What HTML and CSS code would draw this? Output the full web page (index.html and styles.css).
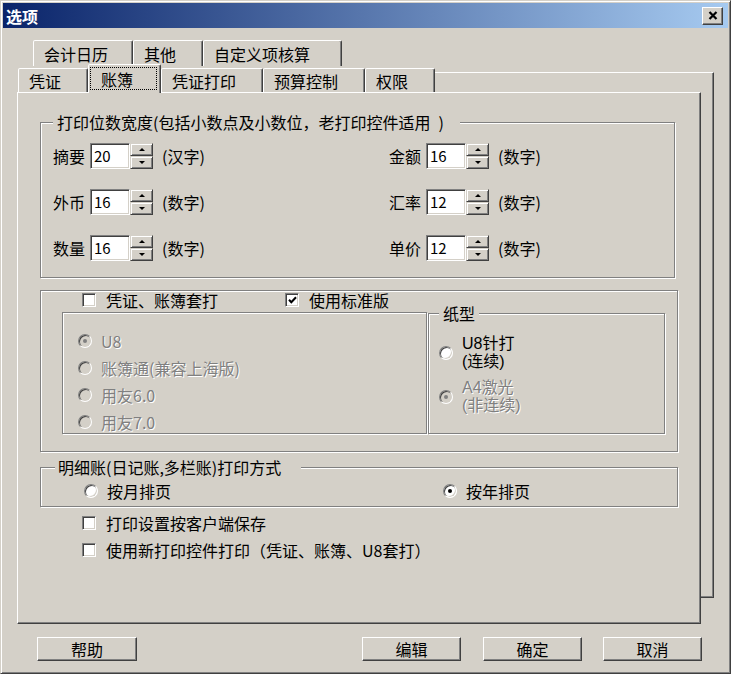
FILE: index.html
```html
<!DOCTYPE html>
<html lang="zh-CN">
<head>
<meta charset="utf-8">
<title>选项</title>
<link rel="stylesheet" href="styles.css">
</head>
<body>
<div class="dialog">
  <div class="titlebar">
    <span class="title">选项</span>
    <span class="close-btn"><svg width="10" height="9" viewBox="0 0 10 9"><path d="M1.5 1 L8.5 8 M8.5 1 L1.5 8" stroke="#000" stroke-width="2.2" fill="none"/></svg></span>
  </div>

  <div class="tabctl">
    <div class="backpage"></div>
    <div class="tabrow back">
      <span class="tab w100">会计日历</span>
      <span class="tab w70">其他</span>
      <span class="tab w139">自定义项核算</span>
    </div>
    <div class="tabrow front">
      <span class="tab w70">凭证</span>
      <span class="tab sel w73"><span class="focus">账簿</span></span>
      <span class="tab w102">凭证打印</span>
      <span class="tab w102">预算控制</span>
      <span class="tab w70">权限</span>
    </div>

    <div class="page">
      <fieldset class="grp g1">
        <legend>打印位数宽度(包括小数点及小数位，老打印控件适用&ensp;)</legend>
        <div class="spin-grid">
          <div class="field"><span class="lbl">摘要</span><span class="edit">20</span><span class="spinbtns"><span class="sb up"></span><span class="sb down"></span></span><span class="unit">(汉字)</span></div>
          <div class="field"><span class="lbl">金额</span><span class="edit">16</span><span class="spinbtns"><span class="sb up"></span><span class="sb down"></span></span><span class="unit">(数字)</span></div>
          <div class="field"><span class="lbl">外币</span><span class="edit">16</span><span class="spinbtns"><span class="sb up"></span><span class="sb down"></span></span><span class="unit">(数字)</span></div>
          <div class="field"><span class="lbl">汇率</span><span class="edit">12</span><span class="spinbtns"><span class="sb up"></span><span class="sb down"></span></span><span class="unit">(数字)</span></div>
          <div class="field"><span class="lbl">数量</span><span class="edit">16</span><span class="spinbtns"><span class="sb up"></span><span class="sb down"></span></span><span class="unit">(数字)</span></div>
          <div class="field"><span class="lbl">单价</span><span class="edit">12</span><span class="spinbtns"><span class="sb up"></span><span class="sb down"></span></span><span class="unit">(数字)</span></div>
        </div>
      </fieldset>

      <fieldset class="grp g2">
        <div class="checkrow">
          <span class="opt cb"><span class="check"></span><span>凭证、账簿套打</span></span>
          <span class="opt cb"><span class="check"><svg width="9" height="8" viewBox="0 0 9 8"><polyline points="1,3.8 3.3,6.2 8,1.2" stroke="#000" stroke-width="2" fill="none"/></svg></span><span>使用标准版</span></span>
        </div>
        <div class="innerrow">
          <fieldset class="grp sub">
            <div class="optlist">
              <span class="opt"><span class="radio dis on"></span><span class="dis">U8</span></span>
              <span class="opt"><span class="radio dis"></span><span class="dis">账簿通(兼容上海版)</span></span>
              <span class="opt"><span class="radio dis"></span><span class="dis">用友6.0</span></span>
              <span class="opt"><span class="radio dis"></span><span class="dis">用友7.0</span></span>
            </div>
          </fieldset>
          <fieldset class="grp paper">
            <legend>纸型</legend>
            <div class="paperlist">
              <span class="opt opt2"><span class="radio"></span><span class="txt"><span class="ln">U8针打</span><span class="ln">(连续)</span></span></span>
              <span class="opt opt2"><span class="radio dis on"></span><span class="txt dis"><span class="ln">A4激光</span><span class="ln">(非连续)</span></span></span>
            </div>
          </fieldset>
        </div>
      </fieldset>

      <fieldset class="grp g3">
        <legend>明细账(日记账,多栏账)打印方式</legend>
        <div class="moderow">
          <span class="opt"><span class="radio"></span><span>按月排页</span></span>
          <span class="opt"><span class="radio on"></span><span>按年排页</span></span>
        </div>
      </fieldset>

      <div class="checks">
        <span class="opt cb"><span class="check"></span><span>打印设置按客户端保存</span></span>
        <span class="opt cb"><span class="check"></span><span>使用新打印控件打印（凭证、账簿、U8套打）</span></span>
      </div>
    </div>
  </div>

  <div class="btnrow">
    <span class="btn help">帮助</span>
    <span class="btn edit-btn">编辑</span>
    <span class="btn ok">确定</span>
    <span class="btn cancel">取消</span>
  </div>
</div>
</body>
</html>
```

FILE: styles.css
```css
* { box-sizing: border-box; }
html, body { margin: 0; padding: 0; background: #d4d0c8; }
body {
  font-family: "Noto Sans CJK SC", "Noto Sans", sans-serif;
  font-size: 16px;
  line-height: 18px;
  color: #000;
}

.dialog {
  width: 731px;
  height: 674px;
  overflow: hidden;
  background: #d4d0c8;
  border: 1px solid;
  border-color: #d4d0c8 #404040 #404040 #d4d0c8;
  box-shadow: inset 1px 1px 0 #fff, inset -1px -1px 0 #808080;
}

/* title bar */
.titlebar {
  margin: 2px 2px 0;
  height: 25px;
  display: flex;
  align-items: center;
  justify-content: space-between;
  padding: 0 5px 0 3px;
  background: linear-gradient(to right, #0a246a, #a6caf0);
}
.title { color: #fff; font-weight: 700; font-size: 16px; }
.close-btn {
  width: 21px;
  height: 18px;
  display: flex;
  align-items: center;
  justify-content: center;
  background: #d4d0c8;
  border: 1px solid;
  border-color: #fff #404040 #404040 #fff;
  box-shadow: inset -1px -1px 0 #808080;
}

/* tab control */
.tabctl { position: relative; width: 697px; margin: 12px 0 0 16px; }
.backpage {
  position: absolute;
  left: 16px;
  top: 32px;
  right: 0;
  height: 526px;
  border-top: 1px solid #fff;
  border-right: 1px solid #404040;
  border-bottom: 1px solid #404040;
  box-shadow: inset -1px -1px 0 #808080;
}
.tabrow { position: relative; z-index: 1; display: flex; height: 26px; }
.tabrow.back { padding-left: 16px; }
.tabrow.front { padding-left: 1px; align-items: flex-start; z-index: 3; }
.tab {
  height: 26px;
  display: flex;
  align-items: center;
  padding-left: 10px;
  border: 1px solid;
  border-bottom: 0;
  border-color: #fff #404040 transparent #fff;
  box-shadow: inset -1px 0 0 #808080;
  border-radius: 2px 2px 0 0;
  background: #d4d0c8;
  white-space: nowrap;
}
.front .tab { margin-top: 2px; height: 24px; }
.front .tab.sel {
  margin-top: -2px;
  height: 29px;
  padding: 2px 3px 3px 1px;
  align-items: stretch;
}
.focus {
  flex: 1;
  display: flex;
  align-items: center;
  padding-left: 10px;
  border: 1px dotted #000;
}
.w70 { width: 70px; }
.w73 { width: 73px; }
.w100 { width: 100px; }
.w102 { width: 102px; }
.w139 { width: 139px; }

.page {
  position: relative;
  z-index: 2;
  width: 684px;
  height: 532px;
  padding: 20px 0 0 22px;
  border: 1px solid;
  border-color: #fff #404040 #404040 #fff;
  box-shadow: inset -1px -1px 0 #808080;
  background: #d4d0c8;
}

/* group boxes */
.grp {
  display: block;
  margin: 0;
  padding: 0;
  min-width: 0;
  border: 1px solid #808080;
  box-shadow: 1px 1px 0 #fff, inset 1px 1px 0 #fff;
}
.grp > legend {
  margin: 0;
  padding: 0 4px;
  line-height: 18px;
  background: #d4d0c8;
}
.g1 { width: 635px; padding: 12px 0 16px 12px; }
.g1 > legend { padding: 0 16px 0 4px; }
.g2 { width: 638px; margin-top: 12px; padding: 0 12px 17px 21px; }
.g3 { width: 638px; margin-top: 6px; padding: 6px 0 6px 14px; }
.g3 > legend { padding: 0 20px 0 3px; }

/* spin edits */
.spin-grid {
  display: grid;
  grid-template-columns: 336px auto;
  row-gap: 20px;
}
.field { display: flex; align-items: center; height: 26px; }
.lbl { width: 32px; margin-right: 5px; }
.edit {
  width: 40px;
  height: 26px;
  padding-left: 3px;
  background: #fff;
  border: 1px solid;
  border-color: #808080 #fff #fff #808080;
  box-shadow: inset 1px 1px 0 #404040, inset -1px -1px 0 #d4d0c8;
  font-size: 15px;
  line-height: 24px;
}
.spinbtns { width: 23px; height: 26px; display: flex; flex-direction: column; }
.sb {
  height: 13px;
  display: flex;
  align-items: center;
  justify-content: center;
  background: #d4d0c8;
  border: 1px solid;
  border-color: #d4d0c8 #404040 #404040 #d4d0c8;
  box-shadow: inset 1px 1px 0 #fff, inset -1px -1px 0 #808080;
}
.sb::after {
  content: "";
  width: 0;
  height: 0;
  border-left: 3px solid transparent;
  border-right: 3px solid transparent;
}
.sb.up::after { border-bottom: 3px solid #000; }
.sb.down::after { border-top: 3px solid #000; }
.unit { margin-left: 9px; }

/* options */
.opt { display: flex; align-items: center; gap: 9px; height: 18px; white-space: nowrap; }
.opt.cb { gap: 10px; }
.radio {
  width: 14px;
  height: 14px;
  flex: none;
  border-radius: 50%;
  background: #fff;
  border: 1px solid;
  border-color: #808080 #fff #fff #808080;
  box-shadow: inset 1px 1px 0 #404040, inset -1px -1px 0 #d4d0c8;
  display: flex;
  align-items: center;
  justify-content: center;
}
.radio.on::after {
  content: "";
  width: 4px;
  height: 4px;
  border-radius: 50%;
  background: #000;
}
.radio.dis { background: #d4d0c8; }
.radio.dis.on::after { background: #808080; }
.check {
  width: 14px;
  height: 14px;
  flex: none;
  background: #fff;
  border: 1px solid;
  border-color: #808080 #fff #fff #808080;
  box-shadow: inset 1px 1px 0 #404040, inset -1px -1px 0 #d4d0c8;
  display: flex;
  align-items: center;
  justify-content: center;
}
.dis { color: #808080; text-shadow: 1px 1px 0 #fff; }

.checkrow {
  display: grid;
  grid-template-columns: 203px auto;
  margin-left: 20px;
  height: 18px;
}
.innerrow {
  display: flex;
  align-items: flex-end;
  gap: 1px;
  margin-top: -5px;
}
.sub { width: 365px; height: 122px; padding: 19px 0 0 15px; }
.paper { width: 237px; height: 130px; padding: 13px 0 0 10px; }
.optlist { display: flex; flex-direction: column; gap: 9px; }
.paperlist { display: flex; flex-direction: column; gap: 8px; }
.opt2 { height: 36px; }
.opt2 .txt {
  display: flex;
  flex-direction: column;
  font-family: "Liberation Sans", "Noto Sans CJK SC", sans-serif;
}
.opt2 .ln { display: block; height: 18px; line-height: 18px; }

.moderow {
  display: grid;
  grid-template-columns: 359px auto;
  margin-left: 29px;
}

.checks {
  display: flex;
  flex-direction: column;
  gap: 9px;
  margin: 7px 0 0 42px;
}

/* buttons */
.btnrow {
  display: flex;
  height: 24px;
  margin-top: 13px;
  padding: 0 28px 0 36px;
}
.btn {
  width: 99px;
  height: 24px;
  display: flex;
  align-items: center;
  justify-content: center;
  background: #d4d0c8;
  border: 1px solid;
  border-color: #fff #404040 #404040 #fff;
  box-shadow: inset -1px -1px 0 #808080;
}
.btn.help { width: 100px; }
.btn.edit-btn { margin-left: auto; }
.btn.ok { margin-left: 22px; }
.btn.cancel { margin-left: 21px; }
```
